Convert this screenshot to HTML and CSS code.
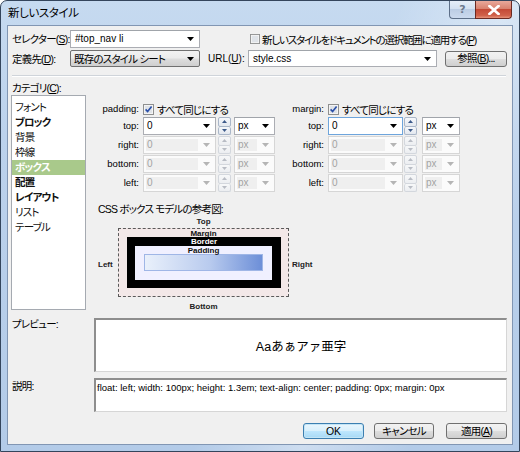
FILE: index.html
```html
<!DOCTYPE html>
<html lang="ja">
<head>
<meta charset="utf-8">
<title>新しいスタイル</title>
<link rel="stylesheet" href="styles.css">
</head>
<body>
<div class="win">
  <div class="titlebar">
    <span class="title">新しいスタイル</span>
    <div class="caps">
      <span class="cap help">?</span>
      <span class="cap close"><svg width="12" height="10" viewBox="0 0 12 10"><path d="M1.5 1 L10.5 9 M10.5 1 L1.5 9" stroke="#fff" stroke-width="2.6" stroke-linecap="square"/></svg></span>
    </div>
  </div>
  <div class="client">
    <div class="row r1">
      <span class="lbl">セレクター(<u>S</u>):</span>
      <div class="combo w130"><span class="val lat">#top_nav li</span><span class="arr"><svg width="7" height="4" viewBox="0 0 7 4"><path d="M0 0H7L3.5 4Z" fill="#000"/></svg></span></div>
      <label class="chk apply"><svg class="box" width="11" height="11" viewBox="0 0 11 11"><rect x="0.5" y="0.5" width="10" height="10" fill="#f4f4f4" stroke="#8e8f8f"/><rect x="2" y="2" width="7" height="7" fill="#dfe3e8"/></svg><span>新しいスタイルをドキュメントの選択範囲に適用する(<u>P</u>)</span></label>
    </div>
    <div class="row r2">
      <span class="lbl">定義先(<u>D</u>):</span>
      <div class="drop w130"><span class="val">既存のスタイル シート</span><span class="arr"><svg width="7" height="4" viewBox="0 0 7 4"><path d="M0 0H7L3.5 4Z" fill="#000"/></svg></span></div>
      <span class="lbl url lat">URL(<u>U</u>):</span>
      <div class="combo w189"><span class="val lat">style.css</span><span class="arr"><svg width="7" height="4" viewBox="0 0 7 4"><path d="M0 0H7L3.5 4Z" fill="#000"/></svg></span></div>
      <span class="btn browse">参照(<u>B</u>)...</span>
    </div>
    <div class="sep"></div>
    <div class="catlabel">カテゴリ(<u>C</u>):</div>
    <div class="main">
      <ul class="list">
        <li>フォント</li>
        <li class="b">ブロック</li>
        <li>背景</li>
        <li>枠線</li>
        <li class="b sel">ボックス</li>
        <li class="b">配置</li>
        <li class="b">レイアウト</li>
        <li>リスト</li>
        <li>テーブル</li>
      </ul>
      <div class="panel">
        <div class="groups">
          <div class="group g1">
            <span class="glbl">padding:</span>
            <label class="chk"><svg class="box" width="11" height="11" viewBox="0 0 11 11"><rect x="0.5" y="0.5" width="10" height="10" fill="#f4f4f4" stroke="#8e8f8f"/><rect x="2" y="2" width="7" height="7" fill="#dfe3e8"/><path d="M2.6 5.4 L4.6 7.6 L8.6 2.4" stroke="#2a4fa8" stroke-width="1.6" fill="none"/></svg><span>すべて同じにする</span></label>

            <span class="glbl">top:</span>
            <div class="ctl">
              <div class="combo inp"><span class="val lat">0</span><span class="arr"><svg width="7" height="4" viewBox="0 0 7 4"><path d="M0 0H7L3.5 4Z" fill="#000"/></svg></span></div>
              <div class="spin"><span class="up"><svg width="5" height="3" viewBox="0 0 5 3"><path d="M0 3H5L2.5 0Z" fill="#3d5a8a"/></svg></span><span class="dn"><svg width="5" height="3" viewBox="0 0 5 3"><path d="M0 0H5L2.5 3Z" fill="#3d5a8a"/></svg></span></div>
              <div class="combo unit"><span class="val lat">px</span><span class="arr"><svg width="7" height="4" viewBox="0 0 7 4"><path d="M0 0H7L3.5 4Z" fill="#000"/></svg></span></div>
            </div>

            <span class="glbl">right:</span>
            <div class="ctl dis">
              <div class="combo inp"><span class="val lat">0</span><span class="arr"><svg width="7" height="4" viewBox="0 0 7 4"><path d="M0 0H7L3.5 4Z" fill="#b5b5b5"/></svg></span></div>
              <div class="spin"><span class="up"><svg width="5" height="3" viewBox="0 0 5 3"><path d="M0 3H5L2.5 0Z" fill="#b8bcc4"/></svg></span><span class="dn"><svg width="5" height="3" viewBox="0 0 5 3"><path d="M0 0H5L2.5 3Z" fill="#b8bcc4"/></svg></span></div>
              <div class="combo unit"><span class="val lat">px</span><span class="arr"><svg width="7" height="4" viewBox="0 0 7 4"><path d="M0 0H7L3.5 4Z" fill="#b5b5b5"/></svg></span></div>
            </div>

            <span class="glbl">bottom:</span>
            <div class="ctl dis">
              <div class="combo inp"><span class="val lat">0</span><span class="arr"><svg width="7" height="4" viewBox="0 0 7 4"><path d="M0 0H7L3.5 4Z" fill="#b5b5b5"/></svg></span></div>
              <div class="spin"><span class="up"><svg width="5" height="3" viewBox="0 0 5 3"><path d="M0 3H5L2.5 0Z" fill="#b8bcc4"/></svg></span><span class="dn"><svg width="5" height="3" viewBox="0 0 5 3"><path d="M0 0H5L2.5 3Z" fill="#b8bcc4"/></svg></span></div>
              <div class="combo unit"><span class="val lat">px</span><span class="arr"><svg width="7" height="4" viewBox="0 0 7 4"><path d="M0 0H7L3.5 4Z" fill="#b5b5b5"/></svg></span></div>
            </div>

            <span class="glbl">left:</span>
            <div class="ctl dis">
              <div class="combo inp"><span class="val lat">0</span><span class="arr"><svg width="7" height="4" viewBox="0 0 7 4"><path d="M0 0H7L3.5 4Z" fill="#b5b5b5"/></svg></span></div>
              <div class="spin"><span class="up"><svg width="5" height="3" viewBox="0 0 5 3"><path d="M0 3H5L2.5 0Z" fill="#b8bcc4"/></svg></span><span class="dn"><svg width="5" height="3" viewBox="0 0 5 3"><path d="M0 0H5L2.5 3Z" fill="#b8bcc4"/></svg></span></div>
              <div class="combo unit"><span class="val lat">px</span><span class="arr"><svg width="7" height="4" viewBox="0 0 7 4"><path d="M0 0H7L3.5 4Z" fill="#b5b5b5"/></svg></span></div>
            </div>
          </div>

          <div class="group g2">
            <span class="glbl">margin:</span>
            <label class="chk"><svg class="box" width="11" height="11" viewBox="0 0 11 11"><rect x="0.5" y="0.5" width="10" height="10" fill="#f4f4f4" stroke="#8e8f8f"/><rect x="2" y="2" width="7" height="7" fill="#dfe3e8"/><path d="M2.6 5.4 L4.6 7.6 L8.6 2.4" stroke="#2a4fa8" stroke-width="1.6" fill="none"/></svg><span>すべて同じにする</span></label>

            <span class="glbl">top:</span>
            <div class="ctl">
              <div class="combo inp focus"><span class="val lat">0</span><span class="arr"><svg width="7" height="4" viewBox="0 0 7 4"><path d="M0 0H7L3.5 4Z" fill="#000"/></svg></span></div>
              <div class="spin"><span class="up"><svg width="5" height="3" viewBox="0 0 5 3"><path d="M0 3H5L2.5 0Z" fill="#3d5a8a"/></svg></span><span class="dn"><svg width="5" height="3" viewBox="0 0 5 3"><path d="M0 0H5L2.5 3Z" fill="#3d5a8a"/></svg></span></div>
              <div class="combo unit"><span class="val lat">px</span><span class="arr"><svg width="7" height="4" viewBox="0 0 7 4"><path d="M0 0H7L3.5 4Z" fill="#000"/></svg></span></div>
            </div>

            <span class="glbl">right:</span>
            <div class="ctl dis">
              <div class="combo inp"><span class="val lat">0</span><span class="arr"><svg width="7" height="4" viewBox="0 0 7 4"><path d="M0 0H7L3.5 4Z" fill="#b5b5b5"/></svg></span></div>
              <div class="spin"><span class="up"><svg width="5" height="3" viewBox="0 0 5 3"><path d="M0 3H5L2.5 0Z" fill="#b8bcc4"/></svg></span><span class="dn"><svg width="5" height="3" viewBox="0 0 5 3"><path d="M0 0H5L2.5 3Z" fill="#b8bcc4"/></svg></span></div>
              <div class="combo unit"><span class="val lat">px</span><span class="arr"><svg width="7" height="4" viewBox="0 0 7 4"><path d="M0 0H7L3.5 4Z" fill="#b5b5b5"/></svg></span></div>
            </div>

            <span class="glbl">bottom:</span>
            <div class="ctl dis">
              <div class="combo inp"><span class="val lat">0</span><span class="arr"><svg width="7" height="4" viewBox="0 0 7 4"><path d="M0 0H7L3.5 4Z" fill="#b5b5b5"/></svg></span></div>
              <div class="spin"><span class="up"><svg width="5" height="3" viewBox="0 0 5 3"><path d="M0 3H5L2.5 0Z" fill="#b8bcc4"/></svg></span><span class="dn"><svg width="5" height="3" viewBox="0 0 5 3"><path d="M0 0H5L2.5 3Z" fill="#b8bcc4"/></svg></span></div>
              <div class="combo unit"><span class="val lat">px</span><span class="arr"><svg width="7" height="4" viewBox="0 0 7 4"><path d="M0 0H7L3.5 4Z" fill="#b5b5b5"/></svg></span></div>
            </div>

            <span class="glbl">left:</span>
            <div class="ctl dis">
              <div class="combo inp"><span class="val lat">0</span><span class="arr"><svg width="7" height="4" viewBox="0 0 7 4"><path d="M0 0H7L3.5 4Z" fill="#b5b5b5"/></svg></span></div>
              <div class="spin"><span class="up"><svg width="5" height="3" viewBox="0 0 5 3"><path d="M0 3H5L2.5 0Z" fill="#b8bcc4"/></svg></span><span class="dn"><svg width="5" height="3" viewBox="0 0 5 3"><path d="M0 0H5L2.5 3Z" fill="#b8bcc4"/></svg></span></div>
              <div class="combo unit"><span class="val lat">px</span><span class="arr"><svg width="7" height="4" viewBox="0 0 7 4"><path d="M0 0H7L3.5 4Z" fill="#b5b5b5"/></svg></span></div>
            </div>
          </div>
        </div>

        <div class="dtitle">CSS ボックス モデルの参考図:</div>
        <div class="diagram">
          <span class="dl top">Top</span>
          <span class="dl left">Left</span>
          <span class="dl right">Right</span>
          <span class="dl bottom">Bottom</span>
          <div class="mbox">
            <span class="in-l">Margin</span>
            <div class="bbox">
              <span class="in-l white">Border</span>
              <div class="pbox">
                <span class="in-l">Padding</span>
                <div class="cbox"></div>
              </div>
            </div>
          </div>
        </div>
      </div>
    </div>

    <div class="frow preview-row">
      <span class="flbl">プレビュー:</span>
      <div class="fbox preview"><span>Aaあぁアァ亜字</span></div>
    </div>
    <div class="frow desc-row">
      <span class="flbl">説明:</span>
      <div class="fbox desc">float: left; width: 100px; height: 1.3em; text-align: center; padding: 0px; margin: 0px</div>
    </div>
    <div class="buttons">
      <span class="btn ok">OK</span>
      <span class="btn cancel">キャンセル</span>
      <span class="btn applyb">適用(<u>A</u>)</span>
    </div>
  </div>
</div>
</body>
</html>
```

FILE: styles.css
```css
html, body {
  margin: 0;
  padding: 0;
}
body {
  width: 520px;
  height: 452px;
  overflow: hidden;
  background: #fff;
  font-family: "Liberation Sans", "Noto Sans CJK JP", sans-serif;
  font-size: 10.5px;
  letter-spacing: -0.8px;
  color: #000;
  font-feature-settings: "palt";
}
u { text-decoration: underline; text-underline-offset: 1px; }
.lat { letter-spacing: 0; }

.win {
  width: 520px;
  height: 452px;
  box-sizing: border-box;
  border: 1px solid #34455c;
  border-radius: 7px 7px 0 0;
  background:
    linear-gradient(115deg, rgba(255,255,255,0) 55%, rgba(255,255,255,0.35) 70%, rgba(255,255,255,0) 85%),
    linear-gradient(180deg, #c6daf0 0%, #bcd2ec 30%, #b3cbe8 100%);
  display: flex;
  flex-direction: column;
  padding: 0 6px 6px 6px;
}

.titlebar {
  height: 24px;
  display: flex;
  align-items: flex-start;
}
.title {
  margin-top: 4px;
  margin-left: 1px;
  font-size: 11.5px;
  letter-spacing: -0.4px;
  line-height: 16px;
  color: #000;
}
.caps {
  margin-left: auto;
  margin-right: 1px;
  display: flex;
}
.cap {
  height: 18px;
  box-sizing: border-box;
  display: flex;
  align-items: center;
  justify-content: center;
  border: 1px solid #5d6f88;
  border-top: none;
}
.help {
  width: 26px;
  border-radius: 0 0 0 4px;
  border-right: none;
  background: linear-gradient(180deg, #e6eef8 0%, #d4e1f1 45%, #bccde4 50%, #cbdaee 100%);
  color: #6d7a8e;
  font-family: "DejaVu Sans", sans-serif;
  font-weight: bold;
  font-size: 11px;
  letter-spacing: 0;
}
.close {
  width: 37px;
  border-radius: 0 0 4px 0;
  border-color: #6b2a22;
  background: linear-gradient(180deg, #e9a99b 0%, #d9826f 45%, #c44a36 50%, #d0614a 85%, #e6937a 100%);
}

.client {
  flex: 1;
  box-sizing: border-box;
  border: 1px solid #8196b3;
  background: #f0f0f0;
  display: flex;
  flex-direction: column;
  padding: 0 5px 0 3px;
}

.row {
  display: flex;
  align-items: center;
}
.row > * { flex: none; }
.r1 { margin-top: 4px; height: 18px; }
.r2 { margin-top: 2px; height: 17px; }
.lbl {
  width: 59px;
  box-sizing: border-box;
  padding-left: 1px;
  white-space: nowrap;
  line-height: 14px;
  overflow: hidden;
}
.lbl.url {
  width: 40px;
  margin-left: 8px;
  padding-left: 0;
  font-size: 10px;
}

.combo, .drop {
  display: flex;
  align-items: center;
  box-sizing: border-box;
  height: 18px;
  border: 1px solid #abadb3;
  border-top-color: #a0a4aa;
  background: #fff;
  white-space: nowrap;
}
.r2 .combo, .r2 .drop { height: 17px; }
.combo .val, .drop .val {
  flex: 1;
  padding-left: 4px;
  overflow: hidden;
  line-height: 14px;
}
.combo .val.lat { font-size: 10px; }
.arr {
  width: 17px;
  display: flex;
  justify-content: center;
  align-items: center;
}
.w130 { width: 130px; }
.w189 { width: 189px; }
.drop {
  border: 1px solid #707070;
  border-radius: 2px;
  background: linear-gradient(180deg, #f2f2f2 0%, #ebebeb 48%, #dddddd 52%, #cfcfcf 100%);
}
.drop .val { padding-left: 3px; }

.chk {
  display: flex;
  align-items: center;
  white-space: nowrap;
}
.chk .box { flex: none; margin-right: 3px; }
.chk.apply { margin-left: 50px; letter-spacing: -1.2px; }
.chk.apply .box { width: 10px; height: 10px; margin-right: 2px; }

.btn {
  display: flex;
  align-items: center;
  justify-content: center;
  box-sizing: border-box;
  height: 16px;
  border: 1px solid #707070;
  border-radius: 3px;
  background: linear-gradient(180deg, #f2f2f2 0%, #ebebeb 48%, #dddddd 52%, #cfcfcf 100%);
  white-space: nowrap;
  line-height: 13px;
}
.browse {
  margin-left: 8px;
  width: 62px;
}

.sep {
  margin-top: 8px;
  margin-left: 1px;
  width: 494px;
  height: 0;
  border-top: 1px solid #cfd4da;
  border-bottom: 1px solid #fff;
}
.catlabel {
  margin-top: 5px;
  padding-left: 1px;
  line-height: 13px;
}

.main {
  display: flex;
  height: 215px;
}
.list {
  list-style: none;
  margin: 0;
  width: 75px;
  flex: none;
  box-sizing: border-box;
  border: 1px solid #a5aab1;
  background: #fff;
  padding: 4px 0 0 0;
}
.list li {
  height: 15px;
  line-height: 15px;
  padding-left: 3px;
  white-space: nowrap;
  color: #111;
}
.list li.b { font-weight: bold; }
.list li.sel {
  background: #a9c98b;
  color: #fff;
}

.panel {
  margin-left: 8px;
  flex: 1;
  display: flex;
  flex-direction: column;
}
.groups {
  display: flex;
  padding-top: 7px;
}
.group {
  display: grid;
  grid-template-columns: 45px auto;
  grid-template-rows: 14px repeat(4, 18px);
  column-gap: 4px;
  row-gap: 1px;
  align-items: center;
}
.g1 { width: 181px; }
.g2 { margin-left: 4px; }
.glbl {
  text-align: right;
  font-size: 9.5px;
  letter-spacing: 0;
  line-height: 12px;
  white-space: nowrap;
}
.ctl {
  display: flex;
  align-items: center;
  height: 18px;
}
.ctl > * { flex: none; }
.ctl .inp { width: 73px; }
.g2 .ctl .inp { width: 75px; }
.ctl .inp .val { padding-left: 3px; }
.ctl .unit { width: 41px; margin-left: 3px; }
.g2 .ctl .unit { width: 38px; margin-left: 5px; }
.ctl .unit .val { padding-left: 3px; }
.combo.focus { border-color: #6ea5dc; }
.spin {
  width: 13px;
  height: 18px;
  margin-left: 2px;
  display: flex;
  flex-direction: column;
}
.g2 .spin { margin-left: 1px; }
.spin span {
  flex: 1;
  display: flex;
  align-items: center;
  justify-content: center;
  box-sizing: border-box;
  border: 1px solid #a9b6c8;
  border-radius: 2px;
  background: linear-gradient(180deg, #f6f8fb 0%, #e3e8ef 100%);
}
.spin .dn { border-top: none; }

.ctl.dis .combo {
  border-color: #d6d6d6;
  background: #fbfbfb;
  color: #a3a3a3;
}
.ctl.dis .combo .val { background: #efefef; margin: 2px 0 2px 2px; padding-left: 1px; line-height: 12px; }
.ctl.dis .spin span {
  border-color: #d3d7dd;
  background: linear-gradient(180deg, #f7f8f9 0%, #eceef1 100%);
}

.dtitle {
  margin-top: 11px;
  padding-left: 4px;
  line-height: 13px;
  white-space: nowrap;
}
.diagram {
  position: relative;
  height: 97px;
  font-size: 8px;
  line-height: 10px;
  letter-spacing: 0;
  font-weight: bold;
  color: #222;
}
.dl {
  position: absolute;
  white-space: nowrap;
}
.dl.top, .dl.bottom {
  left: 24px;
  width: 171px;
  text-align: center;
}
.dl.top { top: 1px; }
.dl.bottom { top: 86px; }
.dl.left { left: 4px; top: 44px; }
.dl.right { left: 198px; top: 44px; }

.mbox {
  position: absolute;
  left: 24px;
  top: 12px;
  width: 171px;
  height: 69px;
  box-sizing: border-box;
  border: 1px dashed #5a5a5a;
  background: #f3e8e8;
  padding: 8px 7px 8px 8px;
  display: flex;
}
.bbox {
  position: relative;
  flex: 1;
  background: #000;
  padding: 9px 9px 8px 8px;
  display: flex;
}
.pbox {
  position: relative;
  flex: 1;
  background: #f0f0ff;
  padding: 8px 9px 9px 9px;
  display: flex;
}
.cbox {
  flex: 1;
  box-sizing: border-box;
  border: 1px solid #9fb6e6;
  background: linear-gradient(90deg, #e9f0fb 0%, #b9cbee 55%, #6d8fd8 100%);
}
.in-l {
  position: absolute;
  left: 0;
  right: 0;
  top: -1px;
  text-align: center;
  line-height: 9px;
  font-size: 8px;
  color: #111;
}
.mbox .in-l { top: 0; }
.in-l.white { color: #fff; }

.frow {
  display: flex;
}
.preview-row { margin-top: 8px; }
.desc-row { margin-top: 6px; }
.flbl {
  width: 83px;
  flex: none;
  box-sizing: border-box;
  padding-left: 1px;
  line-height: 13px;
  white-space: nowrap;
}
.desc-row .flbl { padding-top: 2px; }
.fbox {
  width: 413px;
  flex: none;
  box-sizing: border-box;
  background: #fff;
  border-top: 2px solid #8e8e8e;
  border-left: 2px solid #8e8e8e;
  border-right: 1px solid #d6d6d6;
  border-bottom: 1px solid #d6d6d6;
}
.preview {
  height: 54px;
  display: flex;
  align-items: center;
  justify-content: center;
  font-size: 12.5px;
  letter-spacing: 0;
  font-feature-settings: normal;
}
.desc {
  height: 34px;
  font-size: 9.5px;
  letter-spacing: 0;
  line-height: 13px;
  padding: 1px 0 0 1px;
  white-space: nowrap;
  overflow: hidden;
}

.buttons {
  margin-top: 11px;
  display: flex;
  justify-content: flex-end;
}
.buttons .btn { height: 16px; flex: none; }
.ok {
  width: 61px;
  letter-spacing: 0;
  border-color: #3c7fb1;
  background: linear-gradient(180deg, #eaf6fd 0%, #d9f0fc 48%, #bee6fd 52%, #a7d9f5 100%);
  box-shadow: inset 0 0 0 1px #c4e5f6;
}
.cancel { width: 60px; margin-left: 10px; }
.applyb { width: 61px; margin-left: 12px; }
```
